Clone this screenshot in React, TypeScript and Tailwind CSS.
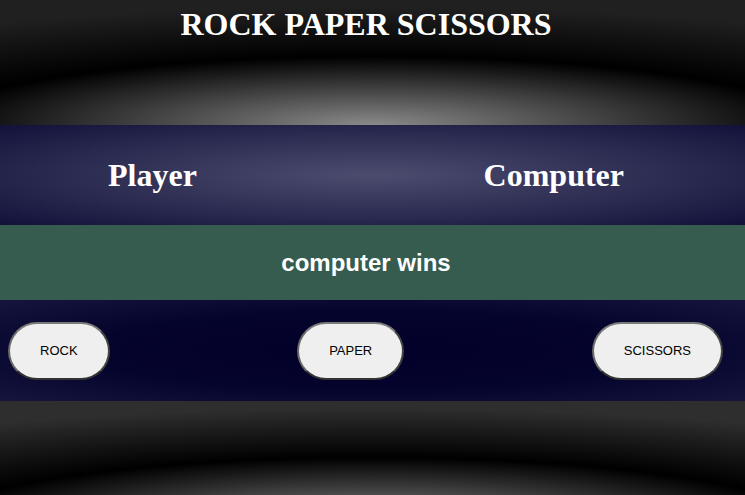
import React from 'react';

const serif = "font-['Liberation_Serif',_'Times_New_Roman',_serif]";
const sans = "font-['Liberation_Sans',_Arial,_sans-serif]";

const moves = ['ROCK', 'PAPER', 'SCISSORS'];

const App: React.FC = () => {
  return (
    <div className="h-screen w-full overflow-hidden flex flex-col bg-black">
      <header className="h-[125px] flex-shrink-0 bg-[radial-gradient(ellipse_760px_118px_at_50%_100%,#8a8a8a_0%,#000_58%,#202020_100%)]">
        <h1 className={`${serif} pt-[6px] pr-[13px] text-center text-[32px] font-bold leading-[normal] text-white`}>
          ROCK PAPER SCISSORS
        </h1>
      </header>

      <section className="h-[100px] flex-shrink-0 flex items-center justify-between pl-[108px] pr-[121px] bg-[radial-gradient(ellipse_at_center,#4c4c6f_0%,#2a2a50_60%,#12113a_100%)]">
        <h2 className={`${serif} text-[32px] font-bold leading-[normal] text-white`}>Player</h2>
        <h2 className={`${serif} text-[32px] font-bold leading-[normal] text-white`}>Computer</h2>
      </section>

      <div className="h-[75px] flex-shrink-0 flex items-center justify-center pr-[13px] bg-[#355c4e]">
        <p className={`${sans} text-[24px] font-bold text-white`}>computer wins</p>
      </div>

      <div className="h-[101px] flex-shrink-0 flex items-center justify-between pl-[8px] pr-[22px] bg-[radial-gradient(ellipse_at_center,#02002a_0%,#05042c_55%,#16153d_100%)]">
        {moves.map((move) => (
          <button
            key={move}
            className={`${sans} h-[58px] px-[30px] rounded-full border-2 border-t-[#7a7a7a] border-l-[#6a6a6a] border-r-[#444] border-b-[#333] bg-[#efefef] text-[13px] text-black`}
          >
            {move}
          </button>
        ))}
      </div>

      <footer className="flex-1 bg-[radial-gradient(ellipse_760px_118px_at_50%_125px,#8a8a8a_0%,#000_58%,#2e2e2e_100%)]" />
    </div>
  );
};

export default App;
